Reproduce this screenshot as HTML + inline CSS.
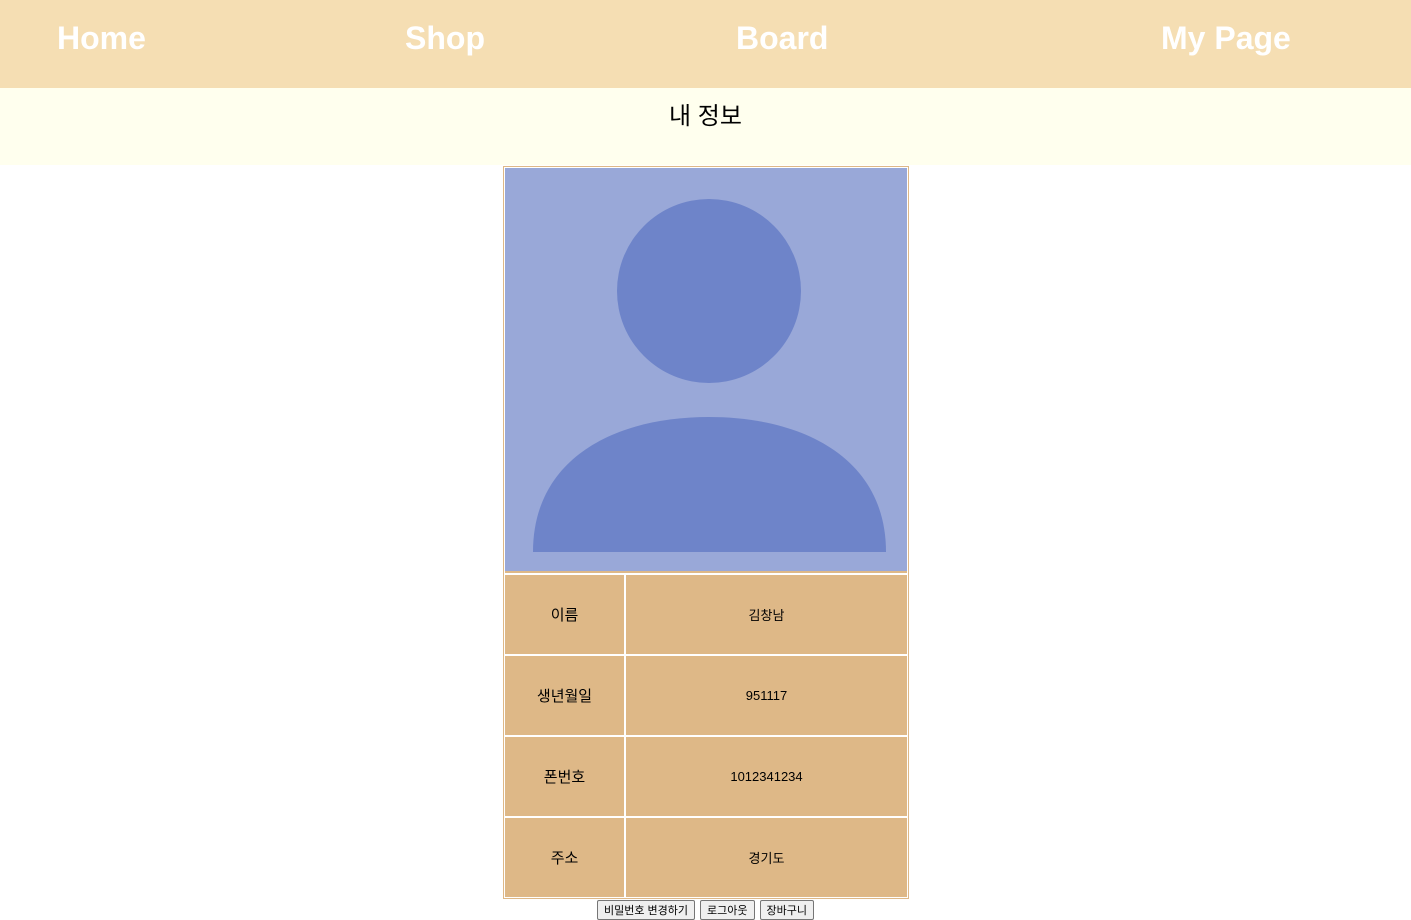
<!DOCTYPE html>
<html><head><meta charset="utf-8"><style>
*{margin:0;padding:0;box-sizing:border-box}
body{width:1411px;height:914px;overflow:hidden;background:#fff;font-family:"Liberation Sans","Noto Sans CJK KR",sans-serif;position:relative}
.hd{position:absolute;left:0;top:0;width:1411px;height:88px;background:#f5deb3}
.hd span{position:absolute;top:20px;color:#fff;font-weight:bold;font-size:32px;font-family:"Liberation Sans",sans-serif}
.band{position:absolute;left:0;top:88px;width:1411px;height:77px;background:#ffffee}
.band div{text-align:center;font-size:24px;margin-top:8px;color:#000}
.tbl{position:absolute;left:503px;top:166px;width:406px;height:733px;border:1px solid #deb887;background:#fff}
.c{position:absolute;background:#deb887;display:flex;align-items:center;justify-content:center;font-size:13px;color:#000}
.l{font-size:15px}
.btns{position:absolute;top:900px;left:597px;display:flex;gap:5px}
.btns span{border:1px solid #767676;background:#efefef;font-size:11px;padding:1px 6px;height:20px;border-radius:2px}
</style></head><body>
<div class="hd"><span style="left:57px">Home</span><span style="left:405px">Shop</span><span style="left:736px">Board</span><span style="left:1161px">My Page</span></div>
<div class="band"><div>내 정보</div></div>
<div class="tbl"></div>
<div class="c" style="left:505px;top:168px;width:402px;height:405px;align-items:flex-start">
<svg width="402" height="403" viewBox="0 0 402 403"><rect width="402" height="403" fill="#99a8d8"/><circle cx="204" cy="123" r="92" fill="#6e84c9"/><path d="M28 384 C28 290 110 249 204 249 C298 249 381 290 381 384 Z" fill="#6e84c9"/></svg></div>
<div class="c l" style="left:505px;top:575px;width:119px;height:79px">이름</div>
<div class="c" style="left:626px;top:575px;width:281px;height:79px">김창남</div>
<div class="c l" style="left:505px;top:656px;width:119px;height:79px">생년월일</div>
<div class="c" style="left:626px;top:656px;width:281px;height:79px">951117</div>
<div class="c l" style="left:505px;top:737px;width:119px;height:79px">폰번호</div>
<div class="c" style="left:626px;top:737px;width:281px;height:79px">1012341234</div>
<div class="c l" style="left:505px;top:818px;width:119px;height:79px">주소</div>
<div class="c" style="left:626px;top:818px;width:281px;height:79px">경기도</div>
<div class="btns"><span>비밀번호 변경하기</span><span>로그아웃</span><span>장바구니</span></div>
</body></html>
